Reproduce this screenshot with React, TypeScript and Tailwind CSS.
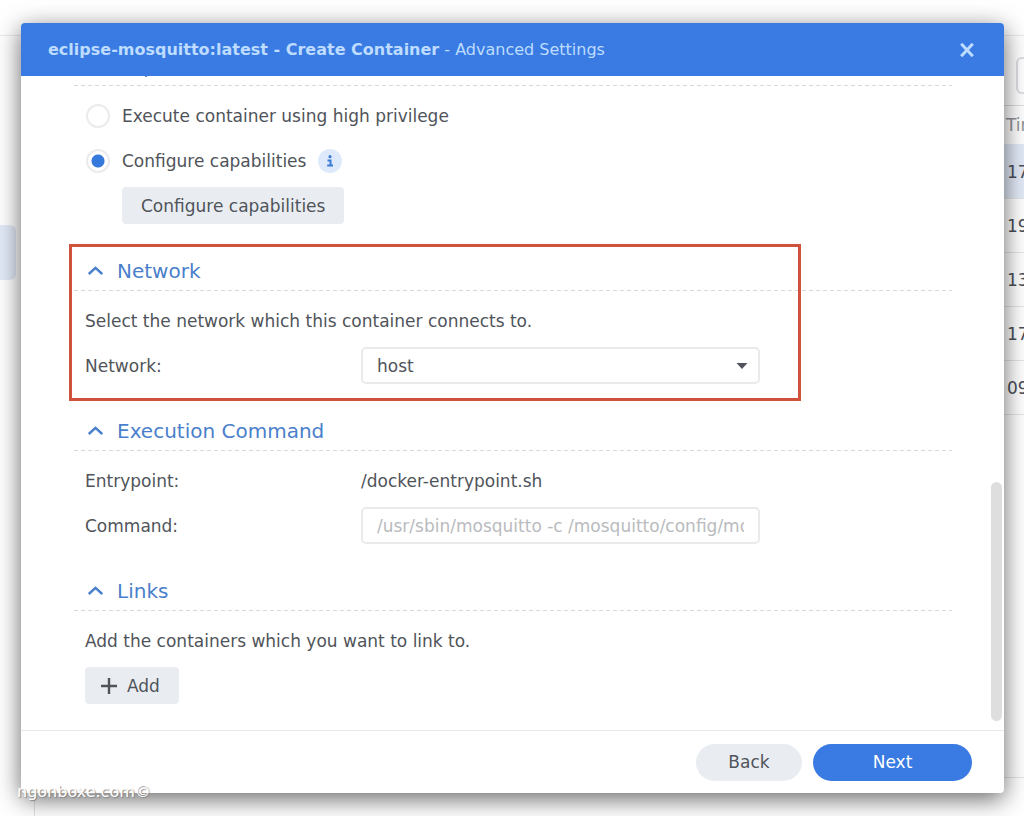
import React, { useState } from "react";

const times = ["17", "19", "13", "17", "09"];

function Section({ title, children, highlighted = false }: { title: string; children: React.ReactNode; highlighted?: boolean }) {
  return (
    <section className="relative pb-[27px] last:pb-0">
      <h2 className="h-[39px]">
        <button type="button" className="flex h-full items-center gap-[14px] pl-[14px] text-[20px] text-[#4a7fcb]">
          <svg width="15" height="9" viewBox="0 0 15 9" fill="none" stroke="currentColor" strokeWidth="2.4" aria-hidden="true">
            <path d="M0.8 8 L7.5 1.8 L14.2 8" />
          </svg>
          {title}
        </button>
      </h2>
      <div className="h-px bg-[repeating-linear-gradient(90deg,#d6d8da_0_4px,transparent_4px_7px)]" />
      <div className="flex flex-col gap-2 pt-[11px] pl-[11px]">{children}</div>
      {highlighted && (
        <div className="pointer-events-none absolute -top-[7px] bottom-[10px] -left-[5px] w-[732px] border-[3px] border-[#d0523c]" />
      )}
    </section>
  );
}

function Radio({ id, label, checked, onSelect }: { id: string; label: string; checked: boolean; onSelect: () => void }) {
  return (
    <>
      <input
        id={id}
        type="radio"
        name="privilege"
        checked={checked}
        onChange={onSelect}
        className="size-6 shrink-0 appearance-none rounded-full border-2 border-[#ebebed] bg-white checked:bg-[radial-gradient(circle,#3579dc_6px,transparent_7px)]"
      />
      <label htmlFor={id}>{label}</label>
    </>
  );
}

function BackgroundApp() {
  return (
    <div className="flex min-h-screen flex-col bg-white" aria-hidden="true">
      <div className="h-9 shrink-0 border-b border-[#e9eaec]" />
      <div className="flex flex-1">
        <div className="w-[35px] shrink-0 border-r border-[#dfe1e4] pt-[189px]">
          <div className="mr-[18px] h-[55px] rounded-r-md bg-[#e3ebf8]" />
        </div>
        <div className="flex min-w-0 flex-1 flex-col">
          <div className="flex h-[70px] items-center justify-end overflow-hidden border-b border-[#dcdee2] pt-[10px]">
            <div className="-mr-8 h-[37px] w-10 shrink-0 rounded-md border-2 border-[#dcdee2] bg-white" />
          </div>
          <div className="flex-1 overflow-hidden">
            <table className="w-full table-fixed border-collapse text-left text-[#4a4e58]">
              <thead>
                <tr className="h-[38px] text-[#909499]">
                  <th />
                  <th className="w-[18px] font-normal">Time</th>
                </tr>
              </thead>
              <tbody>
                {times.map((t, i) => (
                  <tr key={i} className="h-[54px] border-b border-[#e4e6ea] first:bg-[#e3ebf8]">
                    <td />
                    <td className="pt-[2px] pl-px">{t}</td>
                  </tr>
                ))}
              </tbody>
            </table>
          </div>
          <div className="h-[39px] shrink-0 border-t border-[#e4e6ea]" />
        </div>
      </div>
    </div>
  );
}

export default function App() {
  const [mode, setMode] = useState("capabilities");
  const row = "flex min-h-[37px] items-center";
  const field = "h-[37px] w-full rounded-[5px] border-2 border-[#e8eaec] bg-white px-[14px]";

  return (
    <div className="relative min-h-screen overflow-hidden font-['DejaVu_Sans',Verdana,sans-serif] text-[17px] leading-6 text-[#50545a]">
      <BackgroundApp />
      <div className="absolute inset-0 flex pt-[23px] pr-5 pb-[23px] pl-[21px]">
        <div
          role="dialog"
          aria-labelledby="dialog-title"
          className="flex min-w-0 flex-1 flex-col overflow-hidden rounded-[4px] bg-white shadow-[0_6px_24px_rgba(0,0,0,0.6)]"
        >
          <header className="flex h-[53px] shrink-0 items-center justify-between bg-[#397be2] pr-[30px] pl-[27px] text-[#bddcff]">
            <h1 id="dialog-title" className="text-[16px]">
              <b>eclipse-mosquitto:latest - Create Container</b> - Advanced Settings
            </h1>
            <button type="button" aria-label="Close">
              <svg width="14" height="14" viewBox="0 0 14 14" fill="none" stroke="currentColor" strokeWidth="3">
                <path d="M1.2 0.8 L12.8 13.2 M12.8 0.8 L1.2 13.2" />
              </svg>
            </button>
          </header>

          <div className="flex min-h-0 flex-1">
            <div className="flex min-w-0 flex-1 flex-col justify-end overflow-hidden pr-[39px] pb-[26px] pl-[53px]">
              <Section title="Capabilities">
                <div className={`${row} gap-3 pl-px`}>
                  <Radio id="high" label="Execute container using high privilege" checked={mode === "high"} onSelect={() => setMode("high")} />
                </div>
                <div className={`${row} gap-3 pl-px`}>
                  <Radio id="caps" label="Configure capabilities" checked={mode === "capabilities"} onSelect={() => setMode("capabilities")} />
                  <svg width="24" height="24" viewBox="0 0 24 24" aria-hidden="true">
                    <circle cx="12" cy="12" r="12" fill="#deeafb" />
                    <circle cx="12" cy="7.7" r="1.6" fill="#3a7bd5" />
                    <path d="M9.5 11.5 H12.5 V16.6 M9.2 16.6 H15" fill="none" stroke="#3a7bd5" strokeWidth="2" />
                  </svg>
                </div>
                <button type="button" className="ml-[37px] h-[37px] self-start rounded-[4px] bg-[#e9edf2] px-[19px]">
                  Configure capabilities
                </button>
              </Section>

              <Section title="Network" highlighted>
                <p className={row}>Select the network which this container connects to.</p>
                <div className={row}>
                  <label htmlFor="network" className="w-[276px] shrink-0">Network:</label>
                  <div className="relative w-full max-w-[399px]">
                    <select id="network" className={`${field} appearance-none`}>
                      <option>host</option>
                    </select>
                    <svg width="12" height="6" viewBox="0 0 12 6" className="pointer-events-none absolute top-4 right-3" aria-hidden="true">
                      <path d="M0.5 0 H11.5 L6 6 Z" fill="#50545a" />
                    </svg>
                  </div>
                </div>
              </Section>

              <Section title="Execution Command">
                <div className={row}>
                  <span className="w-[276px] shrink-0">Entrypoint:</span>
                  <span>/docker-entrypoint.sh</span>
                </div>
                <div className={row}>
                  <label htmlFor="command" className="w-[276px] shrink-0">Command:</label>
                  <div className="w-full max-w-[399px]">
                    <input
                      id="command"
                      type="text"
                      placeholder="/usr/sbin/mosquitto -c /mosquitto/config/mosquitto.conf"
                      className={`${field} placeholder:text-[#b9bbbe]`}
                    />
                  </div>
                </div>
              </Section>

              <Section title="Links">
                <p className={row}>Add the containers which you want to link to.</p>
                <button type="button" className="flex h-[37px] items-center gap-[10px] self-start rounded-[4px] bg-[#e9edf2] pr-[19px] pl-4">
                  <svg width="16" height="16" viewBox="0 0 16 16" stroke="currentColor" strokeWidth="2.4" aria-hidden="true">
                    <path d="M8 0 V16 M0 8 H16" />
                  </svg>
                  Add
                </button>
              </Section>
            </div>
            <div className="flex w-[13px] shrink-0 flex-col justify-end pr-[2px] pb-[9px]">
              <div className="h-[239px] rounded-full bg-[#dedede]" />
            </div>
          </div>

          <footer className="flex h-[63px] shrink-0 items-center justify-end gap-[11px] border-t border-[#e6eaee] pr-8">
            <button type="button" className="h-[37px] w-[106px] rounded-full bg-[#e9edf2]">Back</button>
            <button type="button" className="h-[37px] w-[159px] rounded-full bg-[#397be2] text-white">Next</button>
          </footer>
        </div>
      </div>
      <div className="absolute bottom-3 left-[17px] text-[16px] text-white [text-shadow:1px_1px_1px_#888]">ngonboxe.com©</div>
    </div>
  );
}
